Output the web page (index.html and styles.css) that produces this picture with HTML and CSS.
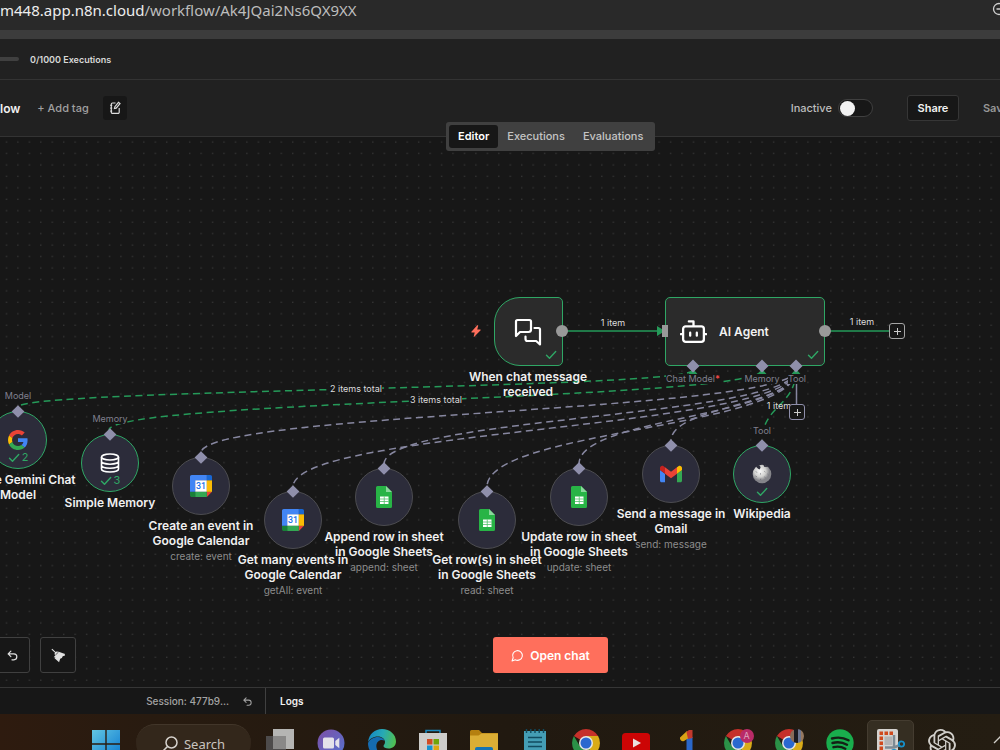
FILE: index.html
```html
<!DOCTYPE html>
<html lang="en">
<head>
<meta charset="utf-8">
<title>Workflow editor</title>
<link rel="stylesheet" href="styles.css">
</head>
<body>
<svg class="defs" aria-hidden="true">
  <defs>
    <symbol id="i-check" viewBox="0 0 12 10"><path d="M1.500 5.200 4.500 8.300 10.700 1.600" fill="none" stroke="#2fa765" stroke-width="1.400" stroke-linecap="round" stroke-linejoin="round"/></symbol>
    <symbol id="i-undo" viewBox="0 0 24 24"><path d="M9 14 4 9l5-5M4 9h10.500a5.500 5.500 0 0 1 0 11H11" fill="none" stroke="currentColor" stroke-width="2.200" stroke-linecap="round" stroke-linejoin="round"/></symbol>
    <symbol id="i-calendar" viewBox="0 0 200 200">
      <path fill="#fff" d="M47 47h106v106H47z"/>
      <path fill="#ea4335" d="M153 200l47-47h-47z"/>
      <path fill="#fbbc04" d="M200 47h-47v106h47z"/>
      <path fill="#34a853" d="M153 153H47v47h106z"/>
      <path fill="#188038" d="M0 153v31c0 9 7 16 16 16h31v-47z"/>
      <path fill="#1967d2" d="M200 47V16c0-9-7-16-16-16h-31v47z"/>
      <path fill="#4285f4" d="M153 0H16C7 0 0 7 0 16v137h47V47h106z"/>
      <text x="100" y="129" text-anchor="middle" font-family="Roboto, sans-serif" font-weight="500" font-size="80" fill="#1a73e8">31</text>
    </symbol>
    <symbol id="i-sheets" viewBox="0 0 16 22">
      <path fill="#28b446" d="M1.500 0H10l6 6v14.500a1.500 1.500 0 0 1-1.500 1.500h-13A1.500 1.500 0 0 1 0 20.500v-19A1.500 1.500 0 0 1 1.500 0z"/>
      <path fill="#8ad89b" d="M10 0l6 6h-6z"/>
      <path fill="#fff" d="M4 10.500h8.500V18H4z"/>
      <path stroke="#28b446" stroke-width=".8" d="M4 13h8.500M4 15.500h8.500M8.250 10.500V18" opacity=".8"/>
    </symbol>
    <symbol id="i-chrome" viewBox="0 0 28 28">
      <path fill="#c5302a" d="M14 14 1.900 7A14 14 0 0 1 26.100 7z"/>
      <path fill="#d9ab18" d="M14 14V7h12.100A14 14 0 0 1 14 28z"/>
      <path fill="#2b9147" d="M14 28A14 14 0 0 1 1.900 7L8 17.500l6 3.500 4-1z"/>
      <circle cx="14" cy="14" r="7" fill="#e6e6e6"/><circle cx="14" cy="14" r="5.500" fill="#2a68cf"/>
    </symbol>
    <linearGradient id="g-win" x1="0" y1="0" x2="1" y2="1"><stop offset="0" stop-color="#62c6e3"/><stop offset="1" stop-color="#0b78d0"/></linearGradient>
    <linearGradient id="g-meet" x1="0" y1="0" x2="1" y2="1"><stop offset="0" stop-color="#7d4fa6"/><stop offset="1" stop-color="#5573cf"/></linearGradient>
    <linearGradient id="g-edge" x1="0" y1=".3" x2="1" y2=".5"><stop offset="0" stop-color="#1587c4"/><stop offset=".5" stop-color="#27a9b5"/><stop offset="1" stop-color="#50bf52"/></linearGradient>
    <radialGradient id="g-wiki" cx=".4" cy=".35"><stop offset="0" stop-color="#fafafa"/><stop offset=".6" stop-color="#d2d2d0"/><stop offset="1" stop-color="#85858a"/></radialGradient>
  </defs>
</svg>

<div class="address">
  <span class="url"><span class="host">m448.app.n8n.cloud</span>/workflow/Ak4JQai2Ns6QX9XX</span>
  <svg class="zoom-icon" viewBox="0 0 16 16" aria-hidden="true"><path d="M4.500 7h5M10.800 10.800 15 15" /><circle cx="7" cy="7" r="5.500"/></svg>
</div>
<div class="strip"></div>
<div class="usage"><span class="meter"></span><span>0/1000 Executions</span></div>

<header class="header">
  <span class="name">low</span>
  <button class="add-tag">+ Add tag</button>
  <button class="note-btn" aria-label="Edit description">
    <svg viewBox="0 0 14 14" aria-hidden="true"><path d="M7.500 2H4.500A1.200 1.200 0 0 0 3.300 3.200v8A1.200 1.200 0 0 0 4.500 12.400h5.500a1.200 1.200 0 0 0 1.200-1.200V7M2.200 4.300h2M2.200 7.200h2M2.200 10.100h2M6.500 7.500l.4-1.800L10.500 1.300l1.500 1.300L8.200 7.100z"/></svg>
  </button>
  <div class="actions">
    <label class="toggle">Inactive <input type="checkbox" role="switch"></label>
    <button class="share">Share</button>
    <button class="save">Save</button>
  </div>
  <nav class="tabs">
    <button class="tab active">Editor</button>
    <button class="tab">Executions</button>
    <button class="tab">Evaluations</button>
  </nav>
</header>

<main class="canvas">
  <svg class="wires" aria-hidden="true">
    <defs>
      <pattern id="dots" width="11.450" height="11.450" patternUnits="userSpaceOnUse"><rect x="6" y="4.500" width="1" height="1" fill="#4c4c4c"/></pattern>
    </defs>
    <rect width="100%" height="100%" fill="url(#dots)"/>
    <g class="dash">
      <path d="M796 233C796 275 201 275 201 316"/>
      <path d="M796 233C796 292 293 292 293 350"/>
      <path d="M796 233C796 280 384 280 384 327"/>
      <path d="M796 233C796 292 487 292 487 350"/>
      <path d="M796 233C796 280 579 280 579 327"/>
      <path d="M796 233C796 269 671 269 671 304"/>
    </g>
    <g class="dash green">
      <path d="M693 233C693 252 18 252 18 270"/>
      <path d="M762 233C762 263 109 263 109 293"/>
      <path d="M796 233C796 269 762 269 762 304"/>
    </g>
    <path class="line green" d="M562 194H660M825 194H889"/>
    <path class="line" d="M796.500 230V268"/>
    <path class="arrow" d="M657 189l8 5-8 5zM688.500 237l4.500-5 4.500 5zM757.500 237l4.500-5 4.500 5zM791.500 237l4.500-5 4.500 5z"/>
  </svg>

  <span class="tag t-model">Model</span>
  <span class="tag t-memory">Memory</span>
  <span class="tag t-tool">Tool</span>
  <span class="count c-two">2 items total</span>
  <span class="count c-three">3 items total</span>
  <span class="count c-chat">1 item</span>
  <span class="count c-out">1 item</span>
  <span class="count c-tool">1 item</span>

  <svg class="bolt" viewBox="0 0 10 12" aria-hidden="true"><path fill="#ff6f5c" d="M6.300.3.4 6.700c-.3.300-.1.800.3.800h3L2.700 11.400c-.1.500.3.700.6.400L9.600 5.300c.3-.3.100-.8-.3-.8H6.200L7.200.7c.1-.5-.6-.7-.9-.4z"/></svg>

  <section class="node trigger">
    <div class="box">
      <svg class="chat-icon" viewBox="0 0 28 28" aria-hidden="true"><path d="M2 18V3.500A1.500 1.500 0 0 1 3.500 2h12A1.500 1.500 0 0 1 17 3.500v8a2.500 2.500 0 0 1-2.500 2.500H6zM20.500 10h4A1.500 1.500 0 0 1 26 11.500V26.500L22.200 23H13.500a2 2 0 0 1-2-2v-2.500"/></svg>
      <svg class="ok"><use href="#i-check"/></svg>
    </div>
    <h2 class="label">When chat message received</h2>
  </section>

  <section class="agent">
    <svg class="robot" viewBox="0 0 26 24" aria-hidden="true"><path d="M13 7V2.300H8.500M5.500 7h15A2.500 2.500 0 0 1 23 9.500v10a2.500 2.500 0 0 1-2.500 2.500h-15A2.500 2.500 0 0 1 3 19.500v-10A2.500 2.500 0 0 1 5.500 7zM.8 14.500H3M23 14.500h2.200M9.800 13.200v2.800M16.200 13.200v2.800"/></svg>
    <h2 class="agent-name">AI Agent</h2>
    <svg class="ok"><use href="#i-check"/></svg>
  </section>

  <svg class="ports" aria-hidden="true">
    <circle cx="562" cy="194" r="6"/><circle cx="825" cy="194" r="6"/><rect x="662" y="188" width="6" height="12"/>
    <path class="gem" d="M693 222.500l6.500 6.500-6.500 6.500-6.500-6.500zM762 222.500l6.500 6.500-6.500 6.500-6.500-6.500zM796 222.500l6.500 6.500-6.500 6.500-6.500-6.500z"/>
  </svg>
  <span class="tag t-chat">Chat Model<b class="req">*</b></span>
  <span class="tag t-mem">Memory</span>
  <span class="tag t-tools">Tool</span>
  <button class="plus p-out" aria-label="Add node"></button>
  <button class="plus p-tool" aria-label="Add tool"></button>

  <section class="node sub done n-gemini">
    <div class="disc">
      <svg class="logo-g" viewBox="0 0 48 48" aria-hidden="true"><path fill="#ea4335" d="M24 9.500c3.540 0 6.710 1.220 9.210 3.600l6.850-6.850C35.900 2.380 30.470 0 24 0 14.620 0 6.510 5.380 2.560 13.220l7.980 6.190C12.430 13.720 17.740 9.500 24 9.500z"/><path fill="#4285f4" d="M46.980 24.550c0-1.570-.15-3.090-.38-4.550H24v9.020h12.940c-.58 2.960-2.260 5.480-4.780 7.180l7.730 6c4.510-4.180 7.090-10.360 7.090-17.650z"/><path fill="#fbbc05" d="M10.530 28.590c-.48-1.450-.76-2.990-.76-4.590s.27-3.140.76-4.590l-7.980-6.190C.92 16.460 0 20.120 0 24s.92 7.540 2.560 10.780l7.970-6.190z"/><path fill="#34a853" d="M24 48c6.480 0 11.930-2.130 15.890-5.810l-7.730-6c-2.150 1.450-4.920 2.300-8.160 2.300-6.260 0-11.570-4.220-13.470-9.910l-7.980 6.190C6.510 42.620 14.620 48 24 48z"/></svg>
      <span class="runs"><svg><use href="#i-check"/></svg>2</span>
    </div>
    <h2 class="label">Google Gemini Chat Model</h2>
  </section>

  <section class="node sub done n-memory">
    <div class="disc">
      <svg class="logo-db" viewBox="0 0 20 20" aria-hidden="true"><ellipse cx="10" cy="4" rx="8.500" ry="3"/><path d="M1.500 4v12c0 1.700 3.800 3 8.500 3s8.500-1.300 8.500-3V4M1.500 8.200c0 1.700 3.800 3 8.500 3s8.500-1.300 8.500-3M1.500 12.300c0 1.700 3.800 3 8.500 3s8.500-1.300 8.500-3"/></svg>
      <span class="runs"><svg><use href="#i-check"/></svg>3</span>
    </div>
    <h2 class="label">Simple Memory</h2>
  </section>

  <section class="node sub n-create">
    <div class="disc"><svg class="logo"><use href="#i-calendar"/></svg></div>
    <h2 class="label">Create an event in Google Calendar</h2>
    <p class="op">create: event</p>
  </section>

  <section class="node sub n-getall">
    <div class="disc"><svg class="logo"><use href="#i-calendar"/></svg></div>
    <h2 class="label">Get many events in Google Calendar</h2>
    <p class="op">getAll: event</p>
  </section>

  <section class="node sub n-append">
    <div class="disc"><svg class="logo"><use href="#i-sheets"/></svg></div>
    <h2 class="label">Append row in sheet in Google Sheets</h2>
    <p class="op">append: sheet</p>
  </section>

  <section class="node sub n-read">
    <div class="disc"><svg class="logo"><use href="#i-sheets"/></svg></div>
    <h2 class="label">Get row(s) in sheet<br>in Google Sheets</h2>
    <p class="op">read: sheet</p>
  </section>

  <section class="node sub n-update">
    <div class="disc"><svg class="logo"><use href="#i-sheets"/></svg></div>
    <h2 class="label">Update row in sheet in Google Sheets</h2>
    <p class="op">update: sheet</p>
  </section>

  <section class="node sub n-gmail">
    <div class="disc"><svg class="logo" viewBox="52 42 88 66" aria-hidden="true"><path fill="#4285f4" d="M58 108h14V74L52 59v43c0 3.320 2.690 6 6 6"/><path fill="#34a853" d="M120 108h14c3.320 0 6-2.690 6-6V59l-20 15"/><path fill="#fbbc04" d="M120 48v26l20-15v-8c0-7.420-8.470-11.650-14.400-7.200"/><path fill="#ea4335" d="M72 74V48l24 18 24-18v26L96 92"/><path fill="#c5221f" d="M52 51v8l20 15V48l-5.600-4.200c-5.940-4.450-14.400-.22-14.400 7.200"/></svg></div>
    <h2 class="label">Send a message in Gmail</h2>
    <p class="op">send: message</p>
  </section>

  <section class="node sub done n-wiki">
    <div class="disc">
      <svg class="logo-w" viewBox="0 0 20 20" aria-hidden="true"><circle cx="10" cy="10" r="9.300" fill="url(#g-wiki)"/><path fill="#30303c" d="M4 2.800 6 .8l2 1 .6 2-1.200 1.600-1.600-.8zM11.500.6l4 1.500-1 1-2.400-.4z"/><path d="M4 7.500l.8 1M8 9.500l1 .8M12.500 7.500l.8.600M3.500 12l1.200.6M8 15.500l1.200-.5M12.500 13l1 .8M15.500 10l.8.700" fill="none" stroke="#707076" stroke-width=".9"/></svg>
      <span class="runs"><svg><use href="#i-check"/></svg></span>
    </div>
    <h2 class="label">Wikipedia</h2>
  </section>

  <div class="controls">
    <button class="ctl" aria-label="Undo"><svg><use href="#i-undo"/></svg></button>
    <button class="ctl" aria-label="Tidy up"><svg class="broom" viewBox="0 0 16 16" aria-hidden="true"><path fill="currentColor" d="M1.300.8 5 4.300l.9-.6 2.300.2 6.800 2.400-.4.800.4 1-2.500.8-.9 1.700-1.800.9-1.200 3.700L3.800 11l1-1-1.900-.2 1.500-1.700L3.700 6l.6-1L.5 1.600z"/><path stroke="#171717" stroke-width=".7" d="M4.600 7.600 8 4.300"/></svg></button>
  </div>
  <button class="open-chat"><svg viewBox="0 0 24 24" aria-hidden="true"><path d="M7.900 20A9 9 0 1 0 4 16.100L2 22z"/></svg>Open chat</button>
</main>

<footer class="logs">
  <div class="session">Session: 477b9... <button class="reset" aria-label="Reset session"><svg><use href="#i-undo"/></svg></button></div>
  <h3 class="logs-title">Logs</h3>
</footer>

<div class="taskbar">
  <button class="start" aria-label="Start"><svg viewBox="0 0 28 28"><path fill="url(#g-win)" d="M0 0h13.300v13.300H0zM14.700 0H28v13.300H14.700zM0 14.700h13.300V28H0zM14.700 14.700H28V28H14.700z"/></svg></button>
  <button class="search"><svg viewBox="0 0 16 16" aria-hidden="true"><circle cx="9.500" cy="6.500" r="5.500"/><path d="M5.500 10.500 1 15"/></svg>Search</button>
  <div class="apps">
    <button class="app" aria-label="Task view"><svg viewBox="0 0 28 28"><path fill="#b5b5b3" d="M7 0h21v20H7z"/><path fill="#4d4b4b" d="M0 7h20v19H0z"/><path fill="#898887" d="M7 7h13v13H7z"/></svg></button>
    <button class="app" aria-label="Meet"><svg viewBox="0 0 28 28"><circle cx="14" cy="14" r="13.500" fill="url(#g-meet)"/><rect x="6" y="8.500" width="11" height="11" rx="1.500" fill="#e4e2ea"/><path fill="#e4e2ea" d="M18.300 12l4-3.300v10.600l-4-3.300z"/></svg></button>
    <button class="app" aria-label="Edge"><svg viewBox="0 0 28 28"><path fill="url(#g-edge)" d="M0 13C1 5 7 0 14 0c8 0 14 5.500 14 12.500 0 4.500-3.500 7-7.500 7-3 0-5-1.200-5-2.500 0-1 1.500-1.500 1.500-4C17 10 14 7.500 10 7.500 5 7.500 1.500 10 0 13z"/><path fill="#156bb0" d="M0 14C1.500 10.500 5.500 8 10 8c3 0 5.500 1.500 6.500 3.500-5-2-9 2-8 7C9.300 23 13 27 17 27.600 7 30 0 23 0 14z"/></svg></button>
    <button class="app" aria-label="Store"><svg viewBox="0 0 28 28"><path fill="none" stroke="#1a88bd" stroke-width="1.500" d="M7 6V1.500h14V6"/><path fill="#cdcdcb" d="M0 4h28v24H0z"/><path fill="#d04b24" d="M8 10h5.500v5.500H8z"/><path fill="#6fa50a" d="M14.500 10H20v5.500h-5.500z"/><path fill="#1592d0" d="M8 16.500h5.500V22H8z"/><path fill="#dea812" d="M14.500 16.500H20V22h-5.500z"/></svg></button>
    <button class="app" aria-label="Files"><svg viewBox="0 0 28 28"><path fill="#b5800f" d="M0 2.500A1.500 1.500 0 0 1 1.500 1H9l3 3h16v8H0z"/><path fill="#dbae35" d="M0 6.500h8.500l3-2H28V28H0z"/><path fill="#1474b5" d="M5 20a2 2 0 0 1 2-2h14a2 2 0 0 1 2 2v8H5z"/></svg></button>
    <button class="app" aria-label="Notepad"><svg viewBox="0 0 28 28"><path fill="#449db5" d="M3 2h22v26H3z"/><path stroke="#114b60" stroke-width="1.400" fill="none" d="M5.500 0v4M9.800 0v4M14 0v4M18.200 0v4M22.500 0v4M7 8.500h14M7 13h14M7 17.500h14M7 22h14"/></svg></button>
    <button class="app" aria-label="Chrome"><svg><use href="#i-chrome"/></svg></button>
    <button class="app" aria-label="YouTube"><svg viewBox="0 0 28 28"><rect y="4" width="28" height="20" rx="3.500" fill="#cc0505"/><path fill="#eadfdd" d="M11 9.500l8 4.500-8 4.500z"/></svg></button>
    <button class="app" aria-label="Google One"><svg viewBox="0 0 28 28"><path fill="#2a67c9" d="M13.500 8h6v20h-6z"/><path fill="#d9a316" d="M7 8.500 14 2l4 5.500-7 4.500a3 3 0 0 1-4-3.500z"/><path fill="#c4392d" d="M13.500 3 16 1h3.500v8l-4.500 1z"/></svg></button>
    <button class="app" aria-label="Chrome, profile A"><svg><use href="#i-chrome"/></svg><span class="badge">A</span></button>
    <button class="app" aria-label="Chrome, second profile"><svg><use href="#i-chrome"/></svg><span class="badge photo"></span></button>
    <button class="app" aria-label="Spotify"><svg viewBox="0 0 28 28"><circle cx="14" cy="14" r="13.700" fill="#19ad4d"/><path fill="none" stroke="#142016" stroke-width="2.400" stroke-linecap="round" d="M6 9.500c5.500-1.500 11.500-1 16.500 1.800M6.500 14c5-1.300 10-.8 14.500 1.700M7.500 18.200c4-1 8-.6 11.800 1.500"/></svg></button>
    <button class="app running" aria-label="Snipping Tool"><svg viewBox="0 0 28 28"><rect x="0" y="0" width="21" height="24" rx="2" fill="#d5d3d0"/><path fill="#cf4a1e" d="M2.500 2.500h3.500V6H2.500zM7.500 2.500H11V6H7.500zM12.500 2.500H16V6h-3.500zM2.500 7.500h3.500V11H2.500zM2.500 12.500h3.500V16H2.500zM2.500 17.500h3.500V21H2.500z"/><path fill="#b3b4b5" d="M7.500 7.500H15V16H7.500z"/><path stroke="#7d8b94" stroke-width="2.500" fill="none" d="M17 6v12M8 18.500h9l6-2.500"/><circle cx="24.500" cy="15" r="2.700" fill="none" stroke="#168fc8" stroke-width="1.800"/><circle cx="17" cy="24" r="3" fill="none" stroke="#168fc8" stroke-width="1.800"/></svg></button>
    <button class="app" aria-label="ChatGPT"><svg viewBox="0 0 24 24"><path fill="#d0cec9" d="M22.282 9.821a5.985 5.985 0 0 0-.516-4.910 6.046 6.046 0 0 0-6.510-2.900A6.065 6.065 0 0 0 4.981 4.182a5.985 5.985 0 0 0-3.998 2.900 6.046 6.046 0 0 0 .743 7.097 5.980 5.980 0 0 0 .511 4.911 6.051 6.051 0 0 0 6.515 2.900A5.985 5.985 0 0 0 13.260 24a6.056 6.056 0 0 0 5.772-4.206 5.990 5.990 0 0 0 3.998-2.900 6.056 6.056 0 0 0-.747-7.073zM13.260 22.430a4.476 4.476 0 0 1-2.876-1.040l.141-.081 4.779-2.758a.795.795 0 0 0 .392-.681v-6.737l2.020 1.169a.071.071 0 0 1 .038.052v5.583a4.504 4.504 0 0 1-4.494 4.493zM3.600 18.304a4.470 4.470 0 0 1-.535-3.014l.142.085 4.783 2.759a.771.771 0 0 0 .780 0l5.843-3.369v2.332a.080.080 0 0 1-.033.062L9.740 19.950a4.500 4.500 0 0 1-6.140-1.646zM2.340 7.896a4.485 4.485 0 0 1 2.366-1.973V11.600a.766.766 0 0 0 .388.676l5.815 3.355-2.020 1.168a.076.076 0 0 1-.071 0l-4.830-2.786A4.504 4.504 0 0 1 2.340 7.872zm16.597 3.855l-5.833-3.387L15.119 7.200a.076.076 0 0 1 .071 0l4.830 2.791a4.494 4.494 0 0 1-.676 8.105v-5.678a.790.790 0 0 0-.407-.667zm2.010-3.023l-.141-.085-4.774-2.782a.776.776 0 0 0-.785 0L9.409 9.230V6.897a.066.066 0 0 1 .028-.061l4.830-2.787a4.500 4.500 0 0 1 6.680 4.660zm-12.640 4.135l-2.020-1.164a.080.080 0 0 1-.038-.057V6.075a4.500 4.500 0 0 1 7.375-3.453l-.142.080L8.704 5.460a.795.795 0 0 0-.393.681zm1.097-2.365l2.602-1.500 2.607 1.500v2.999l-2.597 1.500-2.607-1.500z"/></svg></button>
  </div>
  <button class="tray" aria-label="Hidden icons"><svg viewBox="0 0 16 16"><path d="M1 11l7-7 7 7" fill="none" stroke="#d0cec9" stroke-width="1.400"/></svg></button>
</div>
</body>
</html>
```

FILE: styles.css
```css
* { box-sizing: border-box; }
body {
  margin: 0;
  height: 100vh;
  display: flex;
  flex-direction: column;
  overflow: hidden;
  background: #171717;
  color: #f2f2f2;
  font-family: Inter, sans-serif;
  font-size: 11px;
}
button { margin: 0; padding: 0; border: 0; background: none; color: inherit; font: inherit; }
h2, h3, p { margin: 0; font: inherit; }
svg { display: block; flex: none; }
.defs { position: absolute; width: 0; height: 0; }

.address {
  flex: none;
  height: 30px;
  display: flex;
  align-items: flex-start;
  justify-content: space-between;
  background: #292929;
  color: #bdbdbd;
  font: 15px/20px "Noto Sans", sans-serif;
}
.host { color: #ededed; }
.zoom-icon { width: 16px; height: 16px; margin: 2px -8px 0 0; fill: none; stroke: #d0d0d0; stroke-width: 1.300; }
.strip { flex: none; height: 9px; background: #3c3c3c; }
.usage {
  flex: none;
  height: 41px;
  display: flex;
  align-items: center;
  gap: 11px;
  background: #212121;
  border-bottom: 1px solid #333;
  color: #d8d8d8;
  font-size: 9px;
  font-weight: 600;
}
.meter { width: 19px; height: 4px; border-radius: 0 2px 2px 0; background: #404040; }

.header {
  position: relative;
  z-index: 2;
  flex: none;
  height: 57px;
  display: flex;
  align-items: center;
  background: #212121;
  border-bottom: 1px solid #333;
  font-weight: 500;
}
.name { color: #f0f0f0; font-size: 12px; font-weight: 600; }
.add-tag { margin-left: 17px; color: #a0a0a0; }
.note-btn { margin-left: 14px; width: 24px; height: 24px; display: grid; place-items: center; border-radius: 3px; background: #171717; }
.note-btn svg { width: 14px; height: 14px; fill: none; stroke: #dcdcdc; stroke-width: 1.200; }
.actions { margin: 0 -9px 0 auto; display: flex; align-items: center; }
.toggle { display: flex; align-items: center; gap: 6px; color: #bdbdbd; }
.toggle input { appearance: none; margin: 0; width: 35px; height: 18px; border: 1px solid #404040; border-radius: 9px; background: #171717; }
.toggle input::before { content: ""; display: block; width: 15px; height: 15px; margin: 1px 0 0 1px; border-radius: 50%; background: #f2f2f2; }
.share { margin-left: 34px; width: 52px; height: 26px; border: 1px solid #363636; border-radius: 3px; background: #171717; font-weight: 600; }
.save { margin-left: 24px; color: #969696; font-weight: 600; }

.tabs { position: absolute; left: 446px; top: 42px; height: 29px; display: flex; padding: 3px; border-radius: 3px; background: #404040; color: #c4c4c4; }
.tab { padding: 0 9px 1px; border-radius: 3px; }
.tab.active { background: #171717; color: #fff; font-weight: 600; }

.canvas { position: relative; flex: 1; min-height: 0; overflow: hidden; }
.wires, .ports { position: absolute; inset: 0; width: 100%; height: 100%; }
.dash { fill: none; stroke: #8787a0; stroke-width: 1.500; stroke-dasharray: 7 4.500; }
.line { fill: none; stroke: #8787a0; stroke-width: 1.500; }
.dash.green, .line.green { stroke: #259a59; }
.arrow { fill: #259a59; }
.ports { fill: #999; }
.gem { fill: #8f8fab; }

.tag, .count { position: absolute; transform: translate(-50%, -50%); white-space: nowrap; line-height: 10px; }
.tag { background: #171717; color: #80808f; font-size: 9px; }
.count { background: #171717; color: #dcdcdc; font-size: 9px; }
.req { color: #f04848; }
.t-model { left: 18px; top: 259px; }
.t-memory { left: 110px; top: 282px; }
.t-tool { left: 762px; top: 294px; }
.t-chat { left: 693px; top: 242px; }
.t-mem { left: 762px; top: 242px; }
.t-tools { left: 797px; top: 242px; }
.c-two { left: 356px; top: 252px; }
.c-three { left: 436px; top: 263px; }
.c-chat { left: 613px; top: 186px; }
.c-out { left: 862px; top: 185px; }
.c-tool { left: 779px; top: 269px; background: none; }

.bolt { position: absolute; left: 471px; top: 188px; width: 10px; height: 12px; }
.node { position: absolute; width: 124px; display: flex; flex-direction: column; align-items: center; text-align: center; }
.label { font-size: 12px; font-weight: 600; line-height: 15px; color: #f0f0f0; }
.op { font-size: 10px; line-height: 16px; color: #8c8c8c; }
.trigger { left: 466px; top: 160px; }
.box { position: relative; width: 69px; height: 69px; display: grid; place-items: center; border: 1px solid #2fa765; border-radius: 26px 5px 5px 26px; background: #2b2b2b; }
.trigger .label { margin-top: 3px; }
.chat-icon { width: 28px; height: 28px; fill: none; stroke: #fff; stroke-width: 2.200; stroke-linejoin: round; stroke-linecap: round; }
.ok { position: absolute; right: 5px; bottom: 5px; width: 12px; height: 10px; }
.agent { position: absolute; left: 665px; top: 160px; width: 160px; height: 69px; display: flex; align-items: center; gap: 12px; padding-left: 14px; border: 1px solid #2fa765; border-radius: 5px; background: #2b2b2b; }
.robot { width: 27px; height: 25px; fill: none; stroke: #fff; stroke-width: 2.200; stroke-linecap: round; stroke-linejoin: round; }
.agent-name { font-size: 12px; font-weight: 600; }
.plus { position: absolute; width: 16px; height: 16px; border: 1px solid #a5a5a5; border-radius: 3px; background: linear-gradient(#ccc, #ccc) center / 7px 1px no-repeat, linear-gradient(#ccc, #ccc) center / 1px 7px no-repeat, #171717; }
.p-out { left: 889px; top: 186px; }
.p-tool { left: 789px; top: 267px; border-color: #8f8fab; }

.disc { position: relative; width: 58px; height: 58px; display: grid; place-items: center; margin-bottom: 3px; border: 1px solid #4c4c50; border-radius: 50%; background: #2c2c3a; }
.done .disc { border-color: #2fa765; }
.sub::before { content: ""; position: absolute; z-index: 1; top: -4px; left: 50%; width: 9px; height: 9px; transform: translateX(-50%) rotate(45deg); background: #8f8fab; }
.logo { width: 22px; height: 22px; }
.logo-g { width: 20px; height: 20px; }
.logo-db { width: 20px; height: 20px; fill: none; stroke: #fff; stroke-width: 1.600; }
.logo-w { width: 20px; height: 20px; }
.runs { position: absolute; left: 0; right: 0; bottom: 4px; display: flex; justify-content: center; align-items: center; gap: 2px; min-height: 13px; color: #2fa765; font-size: 11px; line-height: 13px; }
.runs svg { width: 12px; height: 10px; }
.n-gemini { left: -44px; top: 274px; }
.n-memory { left: 48px; top: 297px; }
.n-create { left: 139px; top: 320px; }
.n-getall { left: 231px; top: 354px; }
.n-append { left: 322px; top: 331px; }
.n-read { left: 425px; top: 354px; }
.n-update { left: 517px; top: 331px; }
.n-gmail { left: 609px; top: 308px; }
.n-wiki { left: 700px; top: 308px; }

.controls { position: absolute; left: -6px; bottom: 14px; display: flex; gap: 10px; }
.ctl { width: 36px; height: 36px; display: grid; place-items: center; border: 1px solid #404040; border-radius: 3px; background: #171717; color: #e0e0e0; }
.ctl svg { width: 13px; height: 13px; }
.ctl .broom { width: 15px; height: 15px; }
.open-chat { position: absolute; left: 493px; bottom: 14px; width: 115px; height: 36px; display: flex; align-items: center; justify-content: center; gap: 6px; border-radius: 3px; background: #ff6f5c; color: #fff; font-size: 12px; font-weight: 600; }
.open-chat svg { width: 13px; height: 13px; fill: none; stroke: #fff; stroke-width: 2; stroke-linejoin: round; }

.logs { flex: none; height: 27px; display: flex; align-items: stretch; border-top: 1px solid #363636; background: #171717; }
.session { width: 266px; display: flex; align-items: center; justify-content: flex-end; gap: 13px; padding-right: 12px; border-right: 1px solid #404040; color: #a3a3a3; font-size: 10px; font-weight: 500; }
.reset svg { width: 11px; height: 11px; }
.logs-title { padding-left: 14px; align-self: center; font-size: 10px; font-weight: 600; }

.taskbar { flex: none; height: 36px; display: flex; align-items: flex-start; overflow: hidden; padding-left: 80px; background: linear-gradient(90deg, #2e1b0f, #281b10 15%, #211910 50%, #241d12); }
.start { flex: none; width: 51px; height: 44px; display: grid; place-items: end center; }
.start svg { width: 28px; height: 28px; }
.search { flex: none; margin: 10px 4px 0 5px; width: 115px; height: 38px; display: flex; align-items: center; justify-content: center; gap: 6px; border-top: 1px solid #42362a; border-radius: 19px; background: #33271b; color: #c9c4bf; font: 13px "Noto Sans", sans-serif; }
.search svg { width: 16px; height: 16px; fill: none; stroke: #d6d2cd; stroke-width: 1.500; }
.apps { flex: 0 0 712px; display: grid; grid-template-columns: repeat(14, 1fr); }
.app { position: relative; height: 52px; display: grid; justify-items: center; align-items: start; padding-top: 15px; }
.app svg { width: 28px; height: 28px; }
.running::before { content: ""; position: absolute; z-index: 0; inset: 6px 2px 0; border: 1px solid #443c30; border-radius: 5px; background: #352e22; }
.running svg { position: relative; }
.badge { position: absolute; top: 15px; right: 10px; width: 14px; height: 14px; border-radius: 50%; background: #b92b68; color: #dda5bf; font-size: 9px; line-height: 14px; }
.photo { background: linear-gradient(90deg, #8a6c59 25%, #1c1b20 30% 55%, #6d7690 60% 75%, #96785f 80%); }
.tray { flex: none; margin-left: 26px; height: 52px; display: grid; place-items: center; }
.tray svg { width: 16px; height: 16px; }
```
